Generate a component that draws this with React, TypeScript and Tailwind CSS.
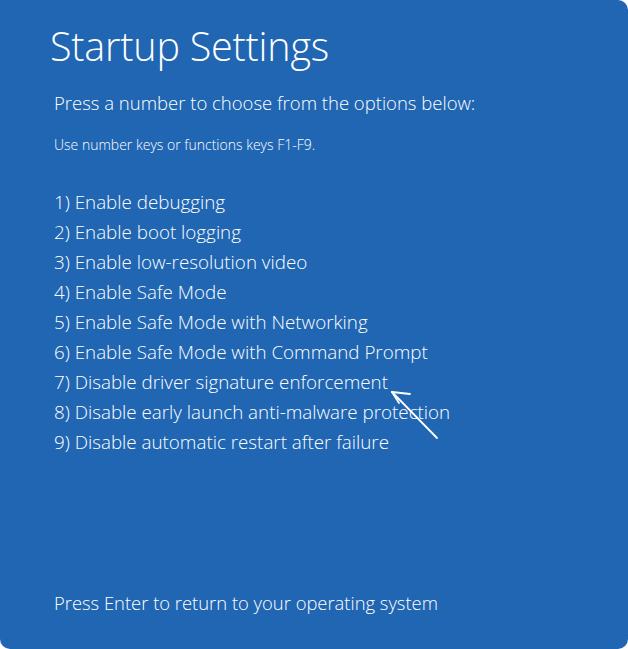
const options = [
  '1) Enable debugging',
  '2) Enable boot logging',
  '3) Enable low-resolution video',
  '4) Enable Safe Mode',
  '5) Enable Safe Mode with Networking',
  '6) Enable Safe Mode with Command Prompt',
  '7) Disable driver signature enforcement',
  '8) Disable early launch anti-malware protection',
  '9) Disable automatic restart after failure',
];

export default function App() {
  return (
    <div className="w-[628px] h-[649px] bg-white" style={{ fontFamily: '"Open Sans", "Noto Sans", sans-serif' }}>
      <div className="relative w-full h-full bg-[#2066b3] rounded-tr-[10px] rounded-b-[10px] text-white flex flex-col">
        <h1 className="pl-[50px] pt-[22px] text-[39.5px] leading-[48px] font-light tracking-[-0.2px]">Startup Settings</h1>
        <p className="pl-[54px] pt-[20px] text-[18.5px] leading-[26px] font-light">Press a number to choose from the options below:</p>
        <p className="pl-[54px] pt-[21px] text-[14px] leading-[16px] font-light">Use number keys or functions keys F1-F9.</p>
        <ul className="pl-[54px] pt-[34px] flex flex-col">
          {options.map(o => (
            <li key={o} className="text-[18.8px] leading-[30px] font-light">{o}</li>
          ))}
        </ul>
        <p className="mt-auto pl-[54px] pb-[33px] text-[18.4px] leading-[26px] font-light">Press Enter to return to your operating system</p>
        <svg className="absolute left-0 top-0 pointer-events-none" width="628" height="649" viewBox="0 0 628 649" fill="none" stroke="white" strokeWidth="1.8" strokeLinecap="round">
          <path d="M437 438 L392 392" />
          <path d="M392 392 L410 394" />
          <path d="M392 392 L399 403" />
        </svg>
      </div>
    </div>
  );
}
